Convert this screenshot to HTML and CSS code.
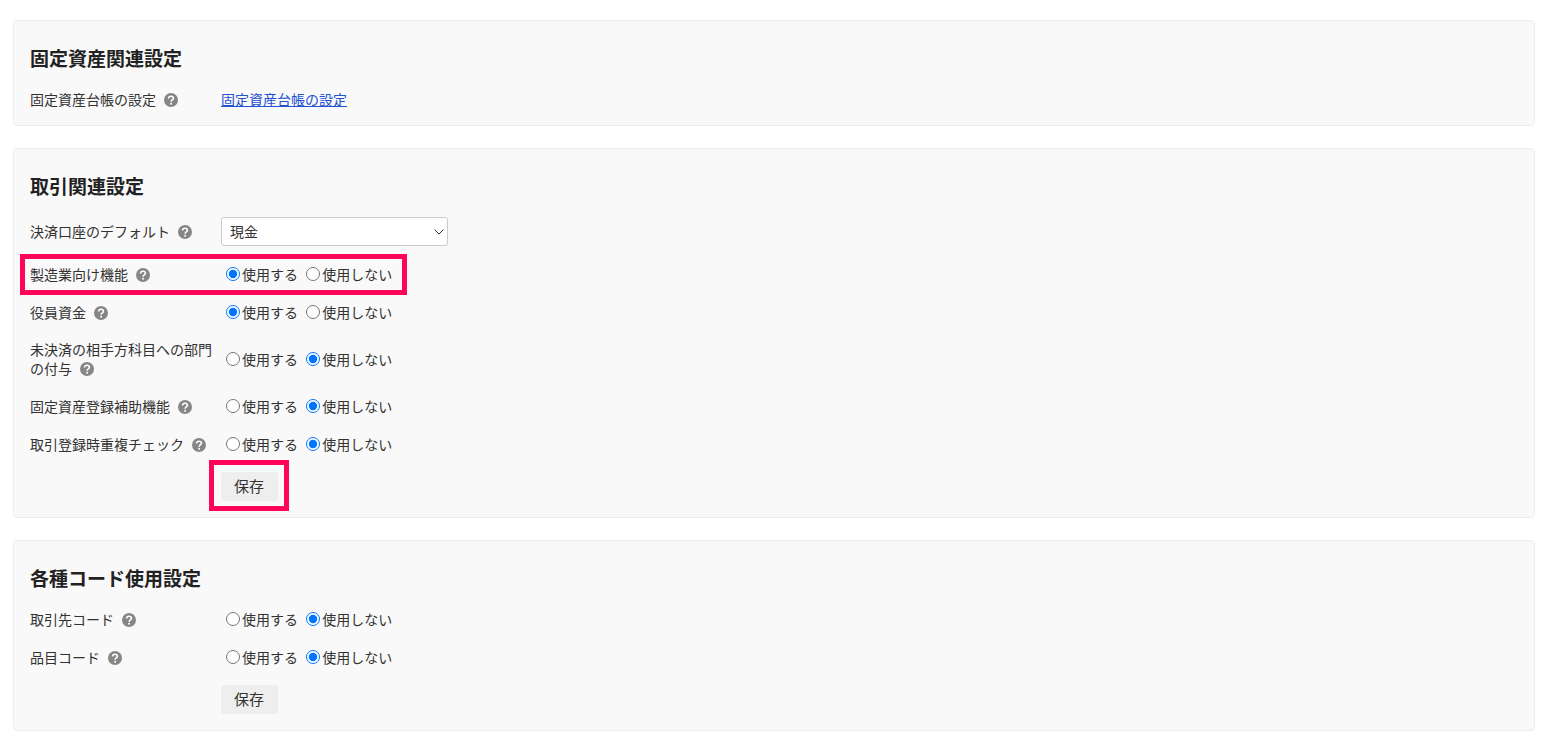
FILE: index.html
```html
<!DOCTYPE html>
<html lang="ja">
  <head>
    <meta charset="UTF-8" />
    <meta name="viewport" content="width=device-width, initial-scale=1.0" />
    <title>詳細設定</title>
    <link rel="stylesheet" href="styles.css">
  </head>

  <body>
    <!-- Shared help icon -->
    <svg class="sprite" aria-hidden="true">
      <symbol id="help" viewBox="0 0 14 14">
        <circle cx="7" cy="7" r="7" fill="#888585" />
        <path d="M4.6 5.4C4.6 3.9 5.6 3.2 7 3.2s2.4.8 2.4 2.1c0 1.6-2.3 1.7-2.3 3.4" fill="none" stroke="#fff" stroke-width="1.6" />
        <circle cx="7.1" cy="10.7" r="1" fill="#fff" />
      </symbol>
    </svg>

    <main class="settings">
      <section class="panel">
        <h2>固定資産関連設定</h2>
        <div class="rows">
          <div class="row">
            <div class="name">固定資産台帳の設定<button type="button" class="help" aria-label="ヘルプ"><svg><use href="#help" /></svg></button></div>
            <div class="field"><a href="#">固定資産台帳の設定</a></div>
          </div>
        </div>
      </section>

      <form class="panel">
        <h2>取引関連設定</h2>
        <div class="rows">
          <div class="row">
            <div class="name"><label for="account">決済口座のデフォルト</label><button type="button" class="help" aria-label="ヘルプ"><svg><use href="#help" /></svg></button></div>
            <div class="field select">
              <select id="account">
                <option>現金</option>
              </select>
              <svg class="chevron" viewBox="0 0 10 6" aria-hidden="true"><path d="M0.6 0.7 5 5 9.4 0.7" /></svg>
            </div>
          </div>
          <div class="row highlight highlight-row" role="radiogroup" aria-labelledby="name-mfg">
            <div class="name"><span id="name-mfg">製造業向け機能</span><button type="button" class="help" aria-label="ヘルプ"><svg><use href="#help" /></svg></button></div>
            <div class="field">
              <label><input type="radio" name="mfg" checked>使用する</label>
              <label><input type="radio" name="mfg">使用しない</label>
            </div>
          </div>
          <div class="row" role="radiogroup" aria-labelledby="name-officer">
            <div class="name"><span id="name-officer">役員資金</span><button type="button" class="help" aria-label="ヘルプ"><svg><use href="#help" /></svg></button></div>
            <div class="field">
              <label><input type="radio" name="officer" checked>使用する</label>
              <label><input type="radio" name="officer">使用しない</label>
            </div>
          </div>
          <div class="row" role="radiogroup" aria-labelledby="name-section">
            <div class="name"><span id="name-section">未決済の相手方科目への部門の付与</span><button type="button" class="help" aria-label="ヘルプ"><svg><use href="#help" /></svg></button></div>
            <div class="field">
              <label><input type="radio" name="section">使用する</label>
              <label><input type="radio" name="section" checked>使用しない</label>
            </div>
          </div>
          <div class="row" role="radiogroup" aria-labelledby="name-asset">
            <div class="name"><span id="name-asset">固定資産登録補助機能</span><button type="button" class="help" aria-label="ヘルプ"><svg><use href="#help" /></svg></button></div>
            <div class="field">
              <label><input type="radio" name="asset">使用する</label>
              <label><input type="radio" name="asset" checked>使用しない</label>
            </div>
          </div>
          <div class="row" role="radiogroup" aria-labelledby="name-duplicate">
            <div class="name"><span id="name-duplicate">取引登録時重複チェック</span><button type="button" class="help" aria-label="ヘルプ"><svg><use href="#help" /></svg></button></div>
            <div class="field">
              <label><input type="radio" name="duplicate">使用する</label>
              <label><input type="radio" name="duplicate" checked>使用しない</label>
            </div>
          </div>
          <div class="actions">
            <div class="highlight highlight-button"><button type="button" class="save">保存</button></div>
          </div>
        </div>
      </form>

      <form class="panel">
        <h2>各種コード使用設定</h2>
        <div class="rows">
          <div class="row" role="radiogroup" aria-labelledby="name-partner">
            <div class="name"><span id="name-partner">取引先コード</span><button type="button" class="help" aria-label="ヘルプ"><svg><use href="#help" /></svg></button></div>
            <div class="field">
              <label><input type="radio" name="partner">使用する</label>
              <label><input type="radio" name="partner" checked>使用しない</label>
            </div>
          </div>
          <div class="row" role="radiogroup" aria-labelledby="name-item">
            <div class="name"><span id="name-item">品目コード</span><button type="button" class="help" aria-label="ヘルプ"><svg><use href="#help" /></svg></button></div>
            <div class="field">
              <label><input type="radio" name="item">使用する</label>
              <label><input type="radio" name="item" checked>使用しない</label>
            </div>
          </div>
          <div class="actions">
            <button type="button" class="save">保存</button>
          </div>
        </div>
      </form>
    </main>
  </body>
</html>
```

FILE: styles.css
```css
* {
  box-sizing: border-box;
}

body {
  margin: 0;
  font-family: "Noto Sans CJK JP", sans-serif;
  font-size: 14px;
  line-height: 19px;
  color: #323232;
  background: #fff;
}

.sprite {
  position: absolute;
  width: 0;
  height: 0;
}

.settings {
  display: flex;
  flex-direction: column;
  gap: 22px;
  padding: 20px 16px 8px 13px;
}

.panel {
  padding: 27px 16px 16px;
  background: #f9f9f9;
  border: 1px solid #ededed;
  border-radius: 4px;
}

h2 {
  margin: 0 0 21px;
  font-size: 19px;
  line-height: 20px;
  font-weight: 700;
  color: #222;
}

.rows {
  display: flex;
  flex-direction: column;
  align-items: flex-start;
  gap: 18px;
}

.row {
  display: flex;
  align-items: center;
  min-height: 20px;
}

.name {
  flex: 0 0 191px;
}

.help {
  width: 14px;
  height: 14px;
  margin: 0 0 0 8px;
  padding: 0;
  border: none;
  background: none;
  vertical-align: -2px;
  cursor: pointer;
}

.help svg {
  display: block;
  width: 14px;
  height: 14px;
}

input[type="radio"] {
  width: 14px;
  height: 14px;
  margin: 0 2px 0 5px;
  vertical-align: -1px;
}

a {
  color: #2251d1;
  text-decoration: underline;
}

.select {
  position: relative;
}

select {
  display: block;
  width: 227px;
  height: 29px;
  padding: 0 24px 0 8px;
  appearance: none;
  font: inherit;
  color: #323232;
  background: #fff;
  border: 1px solid #ccc;
  border-radius: 3px;
}

.chevron {
  position: absolute;
  top: 12px;
  right: 4px;
  width: 10px;
  height: 6px;
  fill: none;
  stroke: #333;
  pointer-events: none;
}

.actions {
  padding-left: 191px;
}

.save {
  display: block;
  height: 29px;
  padding: 0 14px 2px 13px;
  font-family: inherit;
  font-size: 15px;
  line-height: 20px;
  color: #323232;
  background: #efeeee;
  border: none;
  border-radius: 3px;
  cursor: pointer;
}

/* Red frames around the items to check */
.highlight {
  position: relative;
}

.highlight::after {
  content: "";
  position: absolute;
  border: 5px solid #ff0558;
  pointer-events: none;
}

.highlight-row::after {
  inset: -10px -15px -11px -10px;
}

.highlight-button::after {
  inset: -12px -11px -10px -12px;
}
```
